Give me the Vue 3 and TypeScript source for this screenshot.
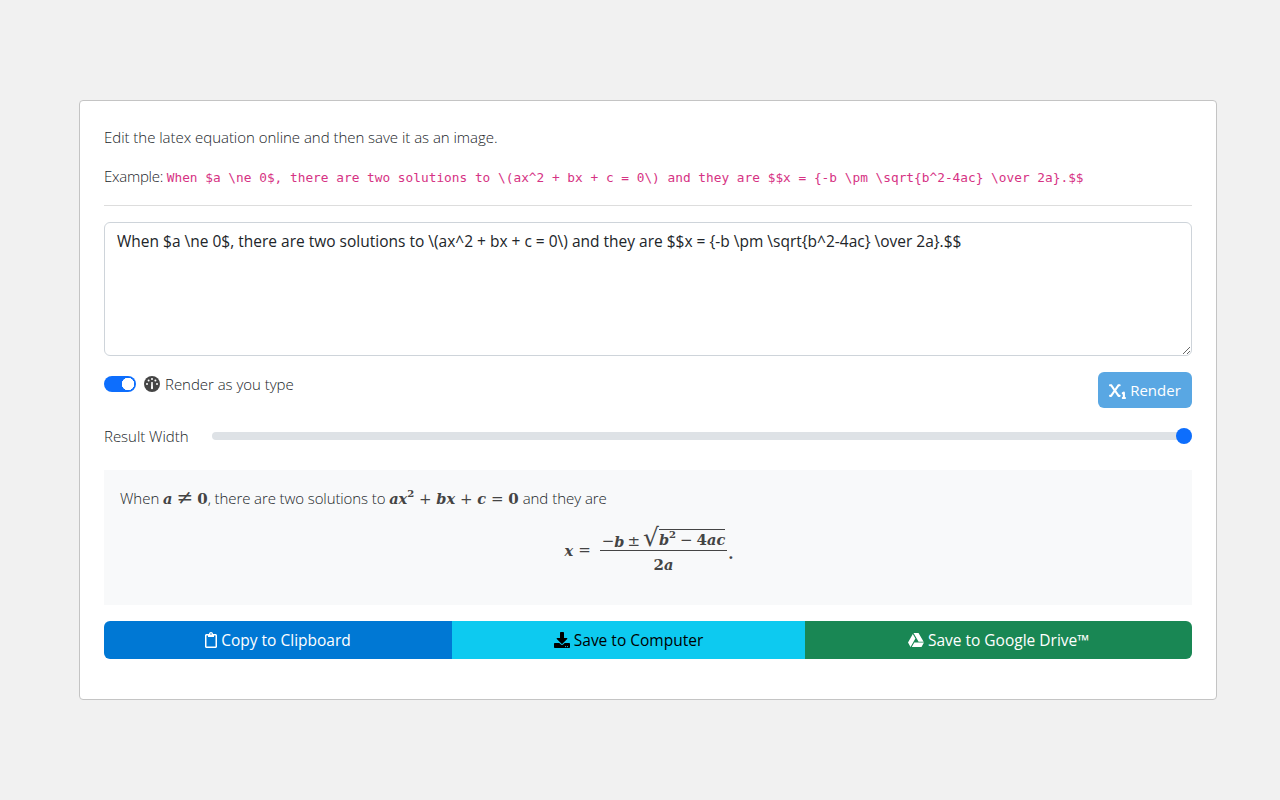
<script setup lang="ts">
import { ref } from 'vue'
const example = 'When $a \\ne 0$, there are two solutions to \\(ax^2 + bx + c = 0\\) and they are $$x = {-b \\pm \\sqrt{b^2-4ac} \\over 2a}.$$'
const source = ref(example)
const live = ref(true)
const width = ref(100)
</script>

<template>
  <main class="page">
    <section class="card">
      <p class="intro">Edit the latex equation online and then save it as an image.</p>
      <p class="example">Example: <code>{{ example }}</code></p>
      <hr class="rule" />
      <textarea v-model="source" class="editor" spellcheck="false"></textarea>
      <div class="controls">
        <label class="toggle">
          <input v-model="live" type="checkbox" class="switch" />
          <svg class="gauge" viewBox="0 0 16 16" width="16" height="16" aria-hidden="true">
            <circle cx="8" cy="8" r="8" fill="#444" />
            <g fill="#fff">
              <circle cx="8" cy="3" r="1" />
              <circle cx="4.6" cy="4.4" r="1" />
              <circle cx="11.4" cy="4.4" r="1" />
              <circle cx="3" cy="8" r="1" />
              <circle cx="13" cy="8" r="1" />
              <path d="M7.3 6h1.4l.3 6.2a1 1 0 0 1-2 0z" />
            </g>
          </svg>
          <span>Render as you type</span>
        </label>
        <button class="render" type="button">
          <svg viewBox="0 0 512 512" width="17" height="17" fill="currentColor" aria-hidden="true">
            <path d="M32 64C14.3 64 0 78.3 0 96s14.3 32 32 32H47.3l89.6 128L47.3 384H32c-17.7 0-32 14.3-32 32s14.3 32 32 32H64c10.4 0 20.2-5.1 26.2-13.6L176 311.8l85.8 122.6c6 8.6 15.8 13.6 26.2 13.6h32c17.7 0 32-14.3 32-32s-14.3-32-32-32H304.7L215.1 256l89.6-128H320c17.7 0 32-14.3 32-32s-14.3-32-32-32H288c-10.4 0-20.2 5.1-26.2 13.6L176 200.2 90.2 77.6C84.2 69.1 74.4 64 64 64H32zM480 320c0-11.1-5.7-21.4-15.2-27.2s-21.2-6.4-31.1-1.4l-32 16c-15.8 7.9-22.2 27.1-14.3 42.9C393 361.5 404.3 368 416 368v80c-17.7 0-32 14.3-32 32s14.3 32 32 32h64c17.7 0 32-14.3 32-32s-14.3-32-32-32V320z" />
          </svg>
          <span>Render</span>
        </button>
      </div>
      <div class="width-row">
        <label for="result-width">Result Width</label>
        <input id="result-width" v-model="width" class="range" type="range" min="10" max="100" />
      </div>
      <div class="preview">
        <p class="preview-line">
          <span>When </span>
          <span class="m">a</span><span class="n op ne">≠</span><span class="d">0</span>
          <span class="tight">, there are two solutions to </span>
          <span class="m">ax</span><sup class="d">2</sup><span class="n op">+</span><span class="m">bx</span><span class="n op">+</span><span class="m">c</span><span class="n op">=</span><span class="d">0</span>
          <span> and they are</span>
        </p>
        <div class="equation">
          <span class="m">x</span>
          <span class="n eq">=</span>
          <span class="frac">
            <span class="numerator">
              <span class="n">−</span><span class="m">b</span>
              <span class="n pm">±</span>
              <span class="root"><span class="surd">√</span><span class="radicand"><span class="m">b</span><sup class="d">2</sup><span class="n minus">−</span><span class="d">4</span><span class="m">ac</span></span></span>
            </span>
            <span class="denominator"><span class="d">2</span><span class="m">a</span></span>
          </span>
          <span class="d dot">.</span>
        </div>
      </div>
      <div class="actions">
        <button class="action copy" type="button">
          <svg viewBox="0 0 384 512" width="12" height="16" fill="currentColor" aria-hidden="true">
            <path d="M336 64h-80c0-35.3-28.7-64-64-64s-64 28.7-64 64H48C21.5 64 0 85.5 0 112v352c0 26.5 21.5 48 48 48h288c26.5 0 48-21.5 48-48V112c0-26.5-21.5-48-48-48zM192 40c13.3 0 24 10.7 24 24s-10.7 24-24 24-24-10.7-24-24 10.7-24 24-24zm144 418c0 3.3-2.7 6-6 6H54c-3.3 0-6-2.7-6-6V118c0-3.3 2.7-6 6-6h42v36c0 6.6 5.4 12 12 12h168c6.6 0 12-5.4 12-12v-36h42c3.3 0 6 2.7 6 6z" />
          </svg>
          Copy to Clipboard
        </button>
        <button class="action save" type="button">
          <svg viewBox="0 0 512 512" width="16" height="16" fill="currentColor" aria-hidden="true">
            <path d="M216 0h80c13.3 0 24 10.7 24 24v168h87.7c17.8 0 26.7 21.5 14.1 34.1L269.7 378.3c-7.5 7.5-19.8 7.5-27.3 0L90.1 226.1c-12.6-12.6-3.7-34.1 14.1-34.1H192V24c0-13.3 10.7-24 24-24zm296 376v112c0 13.3-10.7 24-24 24H24c-13.3 0-24-10.7-24-24V376c0-13.3 10.7-24 24-24h146.7l49 49c20.1 20.1 52.5 20.1 72.6 0l49-49H488c13.3 0 24 10.7 24 24zm-124 88c0-11-9-20-20-20s-20 9-20 20 9 20 20 20 20-9 20-20zm64 0c0-11-9-20-20-20s-20 9-20 20 9 20 20 20 20-9 20-20z" />
          </svg>
          Save to Computer
        </button>
        <button class="action drive" type="button">
          <svg viewBox="0 0 512 512" width="16" height="16" fill="currentColor" aria-hidden="true">
            <path d="M339 314.9L175.4 32h161.2l163.6 282.9H339zm-137.5 23.6L120.9 480h310.5L512 338.5H201.5zM154.1 67.4L0 338.5 80.6 480 237 208.8 154.1 67.4z" />
          </svg>
          Save to Google Drive™
        </button>
      </div>
    </section>
  </main>
</template>

<style>
html, body { margin: 0; background: #f1f1f1; }
</style>

<style scoped>
.page {
  box-sizing: border-box;
  height: 800px;
  padding: 100px 63px 100px 79px;
  font-family: "Open Sans", "Noto Sans", sans-serif;
  font-size: 15px;
  font-weight: 300;
  letter-spacing: -0.03px;
  color: #212529;
}
.card {
  box-sizing: border-box;
  height: 600px;
  padding: 24px;
  background: #fff;
  border: 1px solid #c4c4c4;
  border-radius: 4px;
  display: flex;
  flex-direction: column;
}
p { margin: 0; }
.intro { height: 24px; line-height: 24px; }
.example { height: 24px; line-height: 24px; margin-top: 15px; letter-spacing: -0.25px; }
.example code {
  font-family: "DejaVu Sans Mono", "Liberation Mono", monospace;
  font-size: 12.8px;
  font-weight: 400;
  color: #d63384;
  letter-spacing: 0;
}
.rule { width: 100%; border: 0; border-top: 1px solid #ddd; margin: 17px 0 16px; }
.editor {
  box-sizing: border-box;
  display: block;
  width: 100%;
  height: 134px;
  padding: 6px 12px;
  border: 1px solid #ced4da;
  border-radius: 6px;
  font: 400 15.5px/24px "Open Sans", sans-serif;
  color: #212529;
  background: #fff;
  outline: none;
  resize: vertical;
}
.controls {
  display: flex;
  justify-content: space-between;
  align-items: flex-start;
  margin-top: 16px;
}
.toggle { display: flex; align-items: center; height: 24px; }
.switch {
  appearance: none;
  width: 32px;
  height: 16px;
  margin: 0 8px 0 0;
  border-radius: 8px;
  background: #0d6efd radial-gradient(circle at 24px 8px, #fff 6px, transparent 6.5px);
}
.gauge { margin-right: 5px; }
.render {
  box-sizing: border-box;
  display: flex;
  align-items: center;
  justify-content: center;
  gap: 4px;
  width: 94px;
  height: 36px;
  border: 0;
  border-radius: 6px;
  background: #59a7e3;
  color: #fff;
  font: 400 15px "Open Sans", sans-serif;
}
.width-row {
  display: flex;
  align-items: center;
  height: 24px;
  margin-top: 16px;
}
.width-row label { width: 108px; flex: none; }
.range {
  appearance: none;
  flex: 1;
  min-width: 0;
  height: 16px;
  margin: 0;
  background: transparent;
}
.range::-webkit-slider-runnable-track {
  height: 8px;
  border-radius: 4px;
  background: #dee2e6;
}
.range::-webkit-slider-thumb {
  appearance: none;
  width: 16px;
  height: 16px;
  margin-top: -4px;
  border-radius: 50%;
  background: #0d6efd;
}
.preview {
  height: 135px;
  box-sizing: border-box;
  margin-top: 22px;
  padding: 16px;
  background: #f8f9fa;
}
.preview-line { height: 24px; line-height: 24px; white-space: nowrap; }
.tight { letter-spacing: -0.1px; }
.m, .n, .d {
  font-family: "DejaVu Serif", "Liberation Serif", serif;
  font-size: 15px;
  letter-spacing: 0;
  color: #444;
}
.m { font-style: italic; font-weight: 700; font-size: 14.5px; }
.n { font-weight: 400; }
.d { font-weight: 700; }
.op { margin: 0 4.8px; }
.ne { font-size: 20px; line-height: 0; margin: 0 4px; }
sup.d { font-size: 10px; line-height: 0; vertical-align: 7px; }
.equation {
  display: flex;
  justify-content: center;
  align-items: center;
  gap: 5px;
  margin-top: 8px;
  padding-left: 2px;
  height: 64px;
}
.frac {
  display: inline-flex;
  flex-direction: column;
  align-items: center;
  margin-left: 4px;
}
.numerator {
  display: flex;
  align-items: flex-end;
  height: 27px;
  padding: 0 2px;
  border-bottom: 1px solid #444;
  white-space: nowrap;
}
.pm { margin: 0 3px; }
.root { display: inline-flex; align-items: flex-end; }
.surd { font: 400 25px/24px "DejaVu Serif", serif; color: #444; }
.radicand { border-top: 1px solid #444; height: 20px; line-height: 18px; white-space: nowrap; }
.minus { margin: 0 4px; }
.denominator { line-height: 26px; }
.dot { align-self: center; margin: 8px 0 0 -4px; }
.actions {
  display: grid;
  grid-template-columns: 348fr 353fr 387fr;
  height: 38px;
  margin-top: 16px;
  border-radius: 6px;
  overflow: hidden;
}
.action {
  display: flex;
  align-items: center;
  justify-content: center;
  gap: 4px;
  border: 0;
  padding: 0;
  font: 400 15.5px "Open Sans", sans-serif;
  color: #fff;
}
.copy { background: #0078d4; }
.save { background: #0dcaf0; color: #000; }
.drive { background: #198754; }
</style>
